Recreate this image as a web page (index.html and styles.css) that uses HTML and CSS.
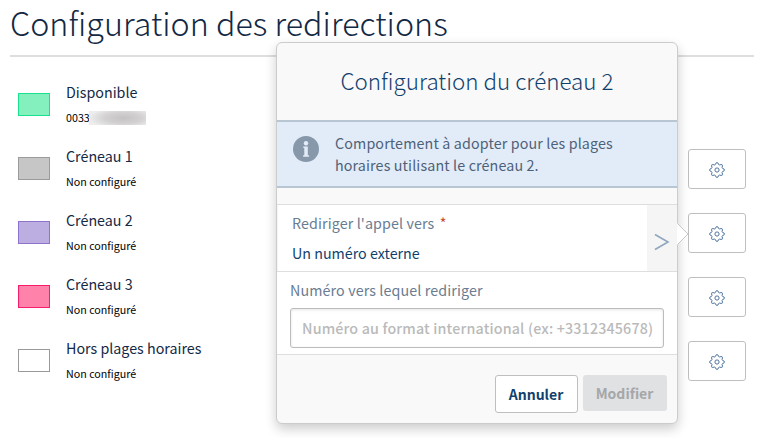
FILE: index.html
```
<!DOCTYPE html>
<html lang="fr">
<head>
<meta charset="utf-8">
<title>Configuration des redirections</title>
<link rel="stylesheet" href="styles.css">
</head>
<body>
<svg class="defs" aria-hidden="true">
  <symbol id="gear" viewBox="0 0 16 16">
    <path d="M6.4 2.5 Q6.7.6 8 .6 Q9.3.6 9.6 2.5 L10.7 3 Q12.4 2.1 13.2 2.8 Q13.9 3.6 13 5.3 L13.5 6.4 Q15.4 6.7 15.4 8 Q15.4 9.3 13.5 9.6 L13 10.7 Q13.9 12.4 13.2 13.2 Q12.4 13.9 10.7 13 L9.6 13.5 Q9.3 15.4 8 15.4 Q6.7 15.4 6.4 13.5 L5.3 13 Q3.6 13.9 2.8 13.2 Q2.1 12.4 3 10.7 L2.5 9.6 Q.6 9.3 .6 8 Q.6 6.7 2.5 6.4 L3 5.3 Q2.1 3.6 2.8 2.8 Q3.6 2.1 5.3 3 Z"/>
    <circle cx="8" cy="8" r="2.1"/>
  </symbol>
</svg>
<main class="page">
  <h1 class="title">Configuration des redirections</h1>
  <ul class="slots">
    <li class="slot">
      <span class="swatch green"></span>
      <div class="info"><p class="name">Disponible</p><p class="state">0033<span class="masked"></span></p></div>
    </li>
    <li class="slot">
      <span class="swatch grey"></span>
      <div class="info"><p class="name">Créneau 1</p><p class="state">Non configuré</p></div>
      <button class="gear"><svg><use href="#gear"/></svg></button>
    </li>
    <li class="slot">
      <span class="swatch purple"></span>
      <div class="info"><p class="name">Créneau 2</p><p class="state">Non configuré</p></div>
      <button class="gear"><svg><use href="#gear"/></svg></button>
    </li>
    <li class="slot">
      <span class="swatch pink"></span>
      <div class="info"><p class="name">Créneau 3</p><p class="state">Non configuré</p></div>
      <button class="gear"><svg><use href="#gear"/></svg></button>
    </li>
    <li class="slot">
      <span class="swatch white"></span>
      <div class="info"><p class="name">Hors plages horaires</p><p class="state">Non configuré</p></div>
      <button class="gear"><svg><use href="#gear"/></svg></button>
    </li>
  </ul>
</main>
<section class="popover">
  <svg class="pointer" viewBox="0 0 12 22"><path class="fill" d="M0 0 L11 11 L0 22 Z"/><path class="edge" d="M.5 .5 L11 11 L.5 21.5"/></svg>
  <h2 class="pop-title">Configuration du créneau 2</h2>
  <div class="notice">
    <svg class="notice-icon" viewBox="0 0 26 26"><circle cx="13" cy="13" r="13"/><circle cx="13" cy="7.2" r="2.2"/><path d="M10.3 10.6h4.5v8.6h1.3v1.5h-6v-1.5h1.2v-7.1h-1z"/></svg>
    <p>Comportement à adopter pour les plages<br>horaires utilisant le créneau 2.</p>
  </div>
  <div class="choice">
    <div class="choice-text">
      <p class="label">Rediriger l'appel vers <span class="star">*</span></p>
      <p class="value">Un numéro externe</p>
    </div>
    <div class="choice-arrow"><svg viewBox="0 0 16 18"><path d="M1 1.5 L14 9 L1 16.5"/></svg></div>
  </div>
  <div class="field">
    <label class="label" for="num">Numéro vers lequel rediriger</label>
    <input id="num" type="text" placeholder="Numéro au format international (ex: +3312345678)">
  </div>
  <footer class="actions">
    <button class="btn cancel">Annuler</button>
    <button class="btn submit" disabled>Modifier</button>
  </footer>
</section>
</body>
</html>
```
FILE: styles.css
```
* { box-sizing: border-box; }
body, h1, h2, p, ul { margin: 0; padding: 0; }
body {
  width: 758px; height: 438px; overflow: hidden; position: relative;
  background: #fff; color: #122844;
  font-family: "Noto Sans CJK SC", "Noto Sans", sans-serif;
}
button, input { font-family: inherit; margin: 0; }
.defs { display: none; }
.page { padding: 0 4px 0 10px; }
.title {
  height: 57px; padding-top: 3px; border-bottom: 2px solid #dedede;
  font-size: 32.2px; line-height: 38px; font-weight: 300; white-space: nowrap; letter-spacing: .03px;
}
.slots { list-style: none; padding: 16px 8px 0; }
.slot { height: 64px; display: flex; align-items: center; }
.swatch { width: 32px; height: 23px; margin-bottom: 2px; border: 1px solid #999; }
.green { background: #84f0be; border-color: #1be08d; }
.grey { background: #c6c6c6; border-color: #9b9b9b; }
.purple { background: #bcaee0; border-color: #8e73cd; }
.pink { background: #ff82ab; border-color: #f81d6a; }
.white { background: #fff; }
.info { flex: 1; padding: 0 0 2px 16px; }
.name { font-size: 14.29px; line-height: 24px; }
.state { display: flex; align-items: center; margin-top: 3px; font-size: 10.71px; line-height: 22px; color: #000; }
.masked {
  width: 57px; height: 14px; margin-left: -1px;
  background: radial-gradient(ellipse 60% 75% at 60% 50%, #c4c2c3, #d3d1d2 55%, #ededed);
}
.gear {
  width: 58px; height: 40px; padding: 0; border: 1px solid #bfbfbf; border-radius: 3px; background: #fff;
  display: flex; align-items: center; justify-content: center;
}
.gear svg { width: 16px; height: 16px; margin-top: 2px; fill: none; stroke: #4f759f; stroke-width: 1; }
.popover {
  position: absolute; left: 276px; top: 42px; width: 402px; height: 382px;
  display: flex; flex-direction: column;
  border: 1px solid #ccc; border-radius: 6px; background: #f9f9f9;
  box-shadow: 0 5px 12px rgba(0, 0, 0, .2);
}
.pointer { position: absolute; left: 400px; top: 180px; width: 12px; height: 22px; }
.pointer .fill { fill: #fff; }
.pointer .edge { fill: none; stroke: #c8c8c8; }
.pop-title {
  height: 77px; line-height: 75px; text-align: center;
  font-size: 22.4px; font-weight: 300; color: #113f6d;
}
.notice {
  height: 68px; display: flex; padding: 10px 15px 0;
  background: #e2ecf8; border: solid #b8c6d3; border-width: 2px 0;
  font-size: 14.29px; line-height: 22px; letter-spacing: .13px; color: #4d6179; white-space: nowrap;
}
.notice-icon { width: 26px; height: 26px; margin: 4px 16px 0 1px; fill: #8798aa; }
.notice-icon path, .notice-icon circle + circle { fill: #e2ecf8; }
.choice {
  height: 68px; margin-top: 16px; display: flex;
  background: #fff; border: solid #dedede; border-width: 1px 0;
}
.choice-text { flex: 1; padding: 3px 0 0 15px; border-left: 1px solid #f5f5f5; }
.label { display: block; font-size: 14.29px; line-height: 30px; letter-spacing: .11px; color: #697c91; }
.choice-text .label { margin-left: -1px; }
.star { color: #c7502b; font-size: 14.29px; margin-left: 2px; }
.value { margin-left: -1px; font-size: 14.29px; line-height: 29px; color: #113f6d; }
.choice-arrow { width: 30px; padding-left: 7px; background: #f5f5f5; display: flex; align-items: center; }
.choice-arrow svg { width: 16px; height: 18px; margin-top: 8px; fill: none; stroke: #8fa6bf; stroke-width: 1.6; }
.field { height: 83px; padding: 4px 13px 0; background: #fff; border-bottom: 1px solid #dedede; }
.field .label { height: 32px; line-height: 28px; }
.field input {
  display: block; width: 374px; height: 40px; padding: 0 4px 1px 11px;
  border: 1px solid #bcbcbc; border-radius: 3px; background: #fff;
  box-shadow: inset 0 1px 3px rgba(0, 0, 0, .1); font-size: 14.29px; font-weight: 500; letter-spacing: .16px;
}
.field input::placeholder { color: #bababa; opacity: 1; }
.actions { display: flex; justify-content: flex-end; gap: 5px; padding: 20px 10px 0 0; }
.btn { height: 38px; padding: 0 1px 0 0; border-radius: 3px; font-size: 14px; font-weight: 700; }
.cancel { width: 83px; border: 1px solid #bfbfbf; background: #fff; color: #113f6d; }
.submit { width: 84px; height: 36px; border: 0; background: #dfe1e3; color: #a5a7a9; }
```
